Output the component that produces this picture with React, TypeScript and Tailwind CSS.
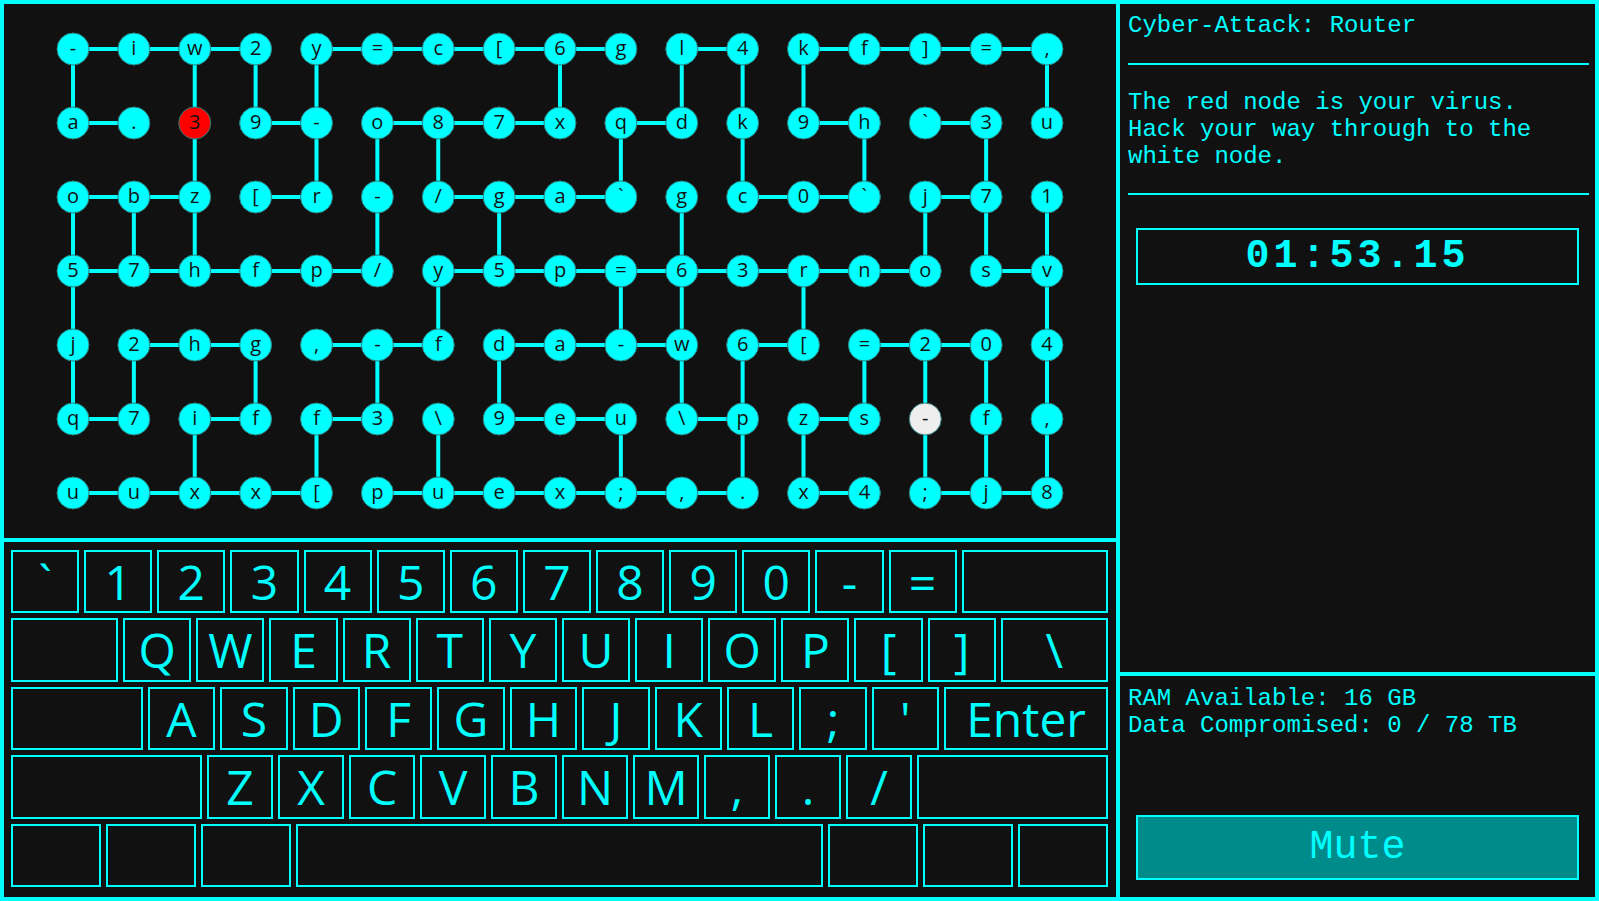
const CYAN = "#00ffff"

const NODES = [
  "-iw2y=c[6gl4kf]=,",
  "a.39-o87xqdk9h`3u",
  "obz[r-/ga`gc0`j71",
  "57hfp/y5p=63rnosv",
  "j2hg,-fda-w6[=204",
  "q7iff3\\9eu\\pzs-f,",
  "uuxx[puex;,.x4;j8",
]

// 1 = link between column c and c+1 in that row
const H_LINKS = [
  "1110111110101111",
  "1001011101001010",
  "1101001110011010",
  "1111101111111101",
  "0110110111010110",
  "1010100110101000",
  "1111011111101011",
]

// 1 = link between row r and r+1 in that column
const V_LINKS = [
  "10111000101110001",
  "00101110010101010",
  "11100101001000111",
  "10000010011010001",
  "11010101001101111",
  "00101010010110111",
]

const cx = (c: number) => 17 + c * 60.875
const cy = (r: number) => 17 + r * 74

function Graph() {
  const lines: { x1: number; y1: number; x2: number; y2: number }[] = []
  H_LINKS.forEach((row, r) =>
    row.split("").forEach((v, c) => {
      if (v === "1") lines.push({ x1: cx(c), y1: cy(r), x2: cx(c + 1), y2: cy(r) })
    })
  )
  V_LINKS.forEach((row, r) =>
    row.split("").forEach((v, c) => {
      if (v === "1") lines.push({ x1: cx(c), y1: cy(r), x2: cx(c), y2: cy(r + 1) })
    })
  )

  return (
    <svg width="1008" height="478" viewBox="0 0 1008 478">
      {lines.map((l, i) => (
        <line key={i} {...l} stroke={CYAN} strokeWidth={4} />
      ))}
      {NODES.map((row, r) =>
        row.split("").map((ch, c) => {
          let fill = CYAN
          if (r === 1 && c === 2) fill = "#ff0000"
          if (r === 5 && c === 14) fill = "#eeeeee"
          return (
            <g key={`${r}-${c}`}>
              <circle cx={cx(c)} cy={cy(r)} r={16} fill={fill} stroke="#2e7d7d" strokeWidth={1} />
              <text
                x={cx(c)}
                y={cy(r) + 6}
                textAnchor="middle"
                fontFamily="'Open Sans', sans-serif"
                fontSize={20}
                fill="#111111"
              >
                {ch}
              </text>
            </g>
          )
        })
      )}
    </svg>
  )
}

// flex-grow values are the key widths minus the 4px border
const KEY_ROWS: { label: string; cls: string }[][] = [
  [
    ..."`1234567890-=".split("").map((k) => ({ label: k, cls: "flex-[64]" })),
    { label: "", cls: "flex-[142]" },
  ],
  [
    { label: "", cls: "flex-[103]" },
    ..."QWERTYUIOP[]".split("").map((k) => ({ label: k, cls: "flex-[64]" })),
    { label: "\\", cls: "flex-[103]" },
  ],
  [
    { label: "", cls: "flex-[127]" },
    ..."ASDFGHJKL;'".split("").map((k) => ({ label: k, cls: "flex-[63]" })),
    { label: "Enter", cls: "flex-[159]" },
  ],
  [
    { label: "", cls: "flex-[187]" },
    ..."ZXCVBNM,./".split("").map((k) => ({ label: k, cls: "flex-[62]" })),
    { label: "", cls: "flex-[187]" },
  ],
  [
    { label: "", cls: "flex-[86]" },
    { label: "", cls: "flex-[86]" },
    { label: "", cls: "flex-[86]" },
    { label: "", cls: "flex-[522]" },
    { label: "", cls: "flex-[86]" },
    { label: "", cls: "flex-[86]" },
    { label: "", cls: "flex-[86]" },
  ],
]

function Keyboard() {
  return (
    <div className="flex flex-1 flex-col gap-[5px] border-2 border-[#00ffff] pt-2 pb-[10px] pl-[7px] pr-2">
      {KEY_ROWS.map((row, i) => (
        <div key={i} className="flex flex-1 gap-[5px]">
          {row.map((k, j) => (
            <div
              key={j}
              className={`${k.cls} flex min-w-0 items-center justify-center border-2 border-[#00ffff] font-['Open_Sans',sans-serif] text-[48px] leading-none text-[#00ffff]`}
            >
              {k.label}
            </div>
          ))}
        </div>
      ))}
    </div>
  )
}

export default function App() {
  return (
    <div className="flex h-screen w-full border-2 border-[#00ffff] bg-[#111111] font-['Liberation_Mono',monospace] text-[#00ffff]">
      <div className="flex w-[1116px] flex-col">
        {/* Node graph */}
        <div className="flex h-[538px] items-center justify-center border-2 border-[#00ffff]">
          <Graph />
        </div>
        {/* Keyboard */}
        <Keyboard />
      </div>

      <div className="flex flex-1 flex-col">
        {/* Mission info */}
        <div className="h-[672px] border-2 border-[#00ffff] pt-[8px]">
          <div className="pl-2 text-[24px] leading-[27px]">Cyber-Attack: Router</div>
          <div className="mt-[24px] ml-2 mr-1.5 h-0.5 bg-[#00ffff]" />
          <p className="mt-[24px] pl-2 pr-1.5 text-[24px] leading-[27px]">
            The red node is your virus.
            <br />
            Hack your way through to the white node.
          </p>
          <div className="mt-[23px] ml-2 mr-1.5 h-0.5 bg-[#00ffff]" />
          <div className="mx-4 mt-[33px] flex h-[57px] items-center justify-center border-2 border-[#00ffff] text-[40px] font-bold tracking-[4px]">
            01:53.15
          </div>
        </div>

        {/* Stats */}
        <div className="flex flex-1 flex-col border-2 border-[#00ffff] pt-[9px]">
          <div className="pl-2 text-[24px] leading-[27px]">
            RAM Available: 16 GB
            <br />
            Data Compromised: 0 / 78 TB
          </div>
          <button className="mx-4 mt-auto mb-[17px] flex h-[65px] items-center justify-center border-2 border-[#00ffff] bg-[#008b8b] text-[40px] text-[#00ffff]">
            Mute
          </button>
        </div>
      </div>
    </div>
  )
}
